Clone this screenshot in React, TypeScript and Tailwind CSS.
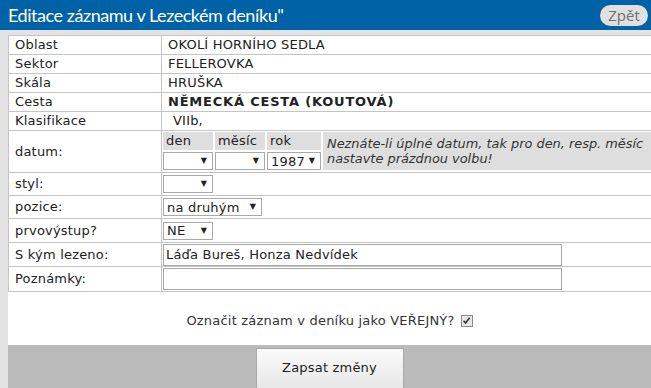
import React from "react";

const Sel = ({ w, value }: { w: string; value?: string }) => (
  <div
    className={`${w} h-[18px] border border-[#a9a9a9] bg-white flex items-center justify-between pl-[3px] pr-[5px] text-[13px] text-[#222] leading-none`}
  >
    <span>{value ?? ""}</span>
    <span className="text-[8px]">▼</span>
  </div>
);

const Row = ({
  label,
  h,
  children,
  bold,
}: {
  label: string;
  h: string;
  children: React.ReactNode;
  bold?: boolean;
}) => (
  <div className={`flex ${h} border-b border-[#c4c4c4]`}>
    <div className="w-[153px] shrink-0 border-r border-[#c4c4c4] pl-[6px] flex items-center">
      {label}
    </div>
    <div className={`flex-1 flex items-center pl-[6px] ${bold ? "font-bold tracking-[0.8px]" : ""}`}>{children}</div>
  </div>
);

export default function App() {
  return (
    <div
      className="w-[651px] h-[388px] overflow-hidden bg-[#e3e3e3] text-[13px] text-[#222] tracking-[0.2px]"
      style={{ fontFamily: '"DejaVu Sans", Verdana, sans-serif' }}
    >
      <div className="h-[30px] bg-[#0062a6] flex items-center justify-between pl-[8px] pr-[3px]">
        <div
          className="text-white text-[18px] leading-none tracking-[-0.45px]"
          style={{ fontFamily: 'Lato, "Open Sans", sans-serif' }}
        >
          Editace záznamu v Lezeckém deníku"
        </div>
        <div
          className="h-[21px] w-[48px] rounded-full bg-[#e0e0e0] text-[#707070] text-[15px] tracking-normal flex items-center justify-center"
          style={{ fontFamily: '"Open Sans", sans-serif' }}
        >
          Zpět
        </div>
      </div>
      <div className="pt-[5px] pl-[8px]">
        <div className="w-[643px] bg-white">
          <div className="border-t border-l border-[#c4c4c4]">
            <Row label="Oblast" h="h-[19px]">OKOLÍ HORNÍHO SEDLA</Row>
            <Row label="Sektor" h="h-[19px]">FELLEROVKA</Row>
            <Row label="Skála" h="h-[19px]">HRUŠKA</Row>
            <Row label="Cesta" h="h-[19px]" bold>
              NĚMECKÁ CESTA (KOUTOVÁ)
            </Row>
            <Row label="Klasifikace" h="h-[19px]">
              <span className="pl-[5px]">VIIb,</span>
            </Row>
            <div className="flex h-[42px] border-b border-[#c4c4c4]">
              <div className="w-[153px] shrink-0 border-r border-[#c4c4c4] pl-[6px] flex items-center">
                datum:
              </div>
              <div className="flex-1 flex gap-[2px] pl-[1px] pt-[1px] pb-[2px]">
                <div className="flex flex-col gap-[2px] w-[50px]">
                  <div className="h-[18px] bg-[#dedede] pl-[3px] flex items-center">den</div>
                  <Sel w="w-[50px]" />
                </div>
                <div className="flex flex-col gap-[2px] w-[50px]">
                  <div className="h-[18px] bg-[#dedede] pl-[3px] flex items-center">měsíc</div>
                  <Sel w="w-[50px]" />
                </div>
                <div className="flex flex-col gap-[2px] w-[54px]">
                  <div className="h-[18px] bg-[#dedede] pl-[3px] flex items-center">rok</div>
                  <Sel w="w-[54px]" value="1987" />
                </div>
                <div className="flex-1 min-w-0 bg-[#dedede] pl-[4px] italic text-[#333] leading-[15px] tracking-normal text-[12.9px] flex flex-col justify-center whitespace-nowrap overflow-hidden">
                  <div>Neznáte-li úplné datum, tak pro den, resp. měsíc</div>
                  <div>nastavte prázdnou volbu!</div>
                </div>
              </div>
            </div>
            <div className="flex h-[23px] border-b border-[#c4c4c4]">
              <div className="w-[153px] shrink-0 border-r border-[#c4c4c4] pl-[6px] flex items-center">styl:</div>
              <div className="flex-1 flex items-center pl-[1px]">
                <Sel w="w-[50px]" />
              </div>
            </div>
            <div className="flex h-[23px] border-b border-[#c4c4c4]">
              <div className="w-[153px] shrink-0 border-r border-[#c4c4c4] pl-[6px] flex items-center">pozice:</div>
              <div className="flex-1 flex items-center pl-[1px]">
                <Sel w="w-[99px]" value="na druhým" />
              </div>
            </div>
            <div className="flex h-[24px] border-b border-[#c4c4c4]">
              <div className="w-[153px] shrink-0 border-r border-[#c4c4c4] pl-[6px] flex items-center">prvovýstup?</div>
              <div className="flex-1 flex items-center pl-[1px]">
                <Sel w="w-[50px]" value="NE" />
              </div>
            </div>
            <div className="flex h-[24px] border-b border-[#c4c4c4]">
              <div className="w-[153px] shrink-0 border-r border-[#c4c4c4] pl-[6px] flex items-center">S kým lezeno:</div>
              <div className="flex-1 flex items-center pl-[1px]">
                <div className="w-[399px] h-[22px] border border-[#a9a9a9] pl-[2px] flex items-center">
                  Láďa Bureš, Honza Nedvídek
                </div>
              </div>
            </div>
            <div className="flex h-[25px] border-b border-[#c4c4c4]">
              <div className="w-[153px] shrink-0 border-r border-[#c4c4c4] pl-[6px] flex items-center">Poznámky:</div>
              <div className="flex-1 flex items-center pl-[1px]">
                <div className="w-[399px] h-[22px] border border-[#a9a9a9]" />
              </div>
            </div>
          </div>
          <div className="h-[53px] flex items-center justify-center gap-[6px] pt-[4px]">
            <span className="text-[#333]">Označit záznam v deníku jako VEŘEJNÝ?</span>
            <span className="w-[12px] h-[12px] border border-[#8a8a8a] bg-[#e8e8e8] flex items-center justify-center">
              <svg width="9" height="9" viewBox="0 0 9 9">
                <path d="M1.5 4.8 L3.6 7 L7.6 1.8" stroke="#333" strokeWidth="1.6" fill="none" />
              </svg>
            </span>
          </div>
          <div className="h-[43px] bg-[#bbbbbb] flex justify-center pt-[3px]">
            <div className="w-[148px] h-[44px] border border-[#a8a8a8] bg-gradient-to-b from-[#fafafa] to-[#e6e6e6] flex items-center justify-center text-[13px] text-[#222] pb-[4px]">
              Zapsat změny
            </div>
          </div>
        </div>
      </div>
    </div>
  );
}
